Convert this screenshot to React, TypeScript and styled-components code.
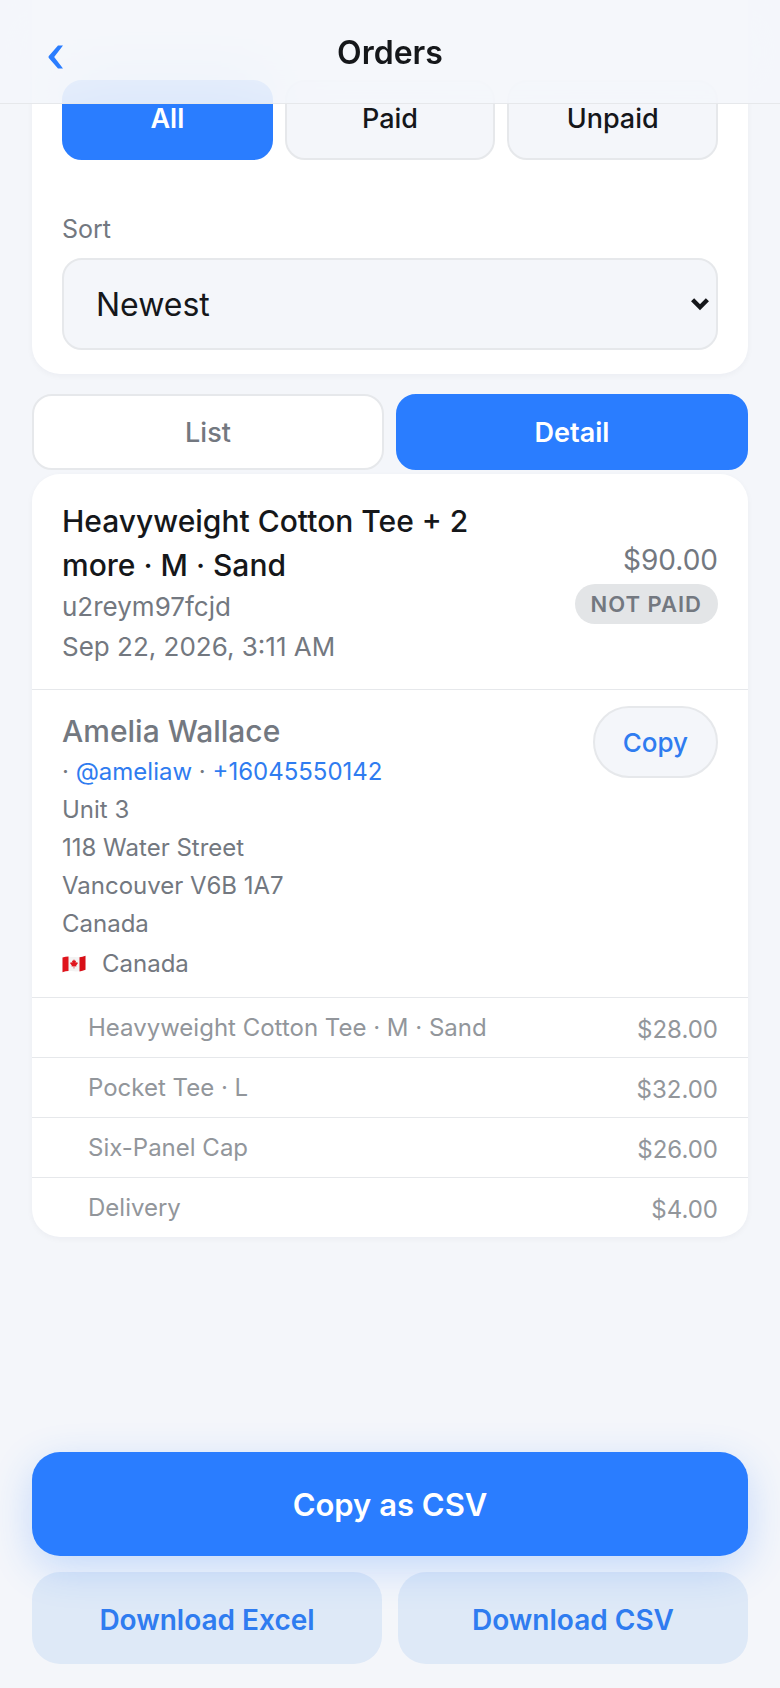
import React, { useState } from 'react';
import styled, { createGlobalStyle, css } from 'styled-components';

const color = {
  page: '#f4f6fa',
  card: '#ffffff',
  ink: '#15171a',
  muted: '#737880',
  faint: '#92969b',
  line: '#e6e8eb',
  blue: '#2a7dff',
  link: '#2f7cf0',
};

const GlobalStyle = createGlobalStyle`
  *, *::before, *::after { box-sizing: border-box; }
  body {
    margin: 0;
    background: ${color.page};
    color: ${color.ink};
    font-family: Inter, 'Liberation Sans', sans-serif;
  }
  h1, h2, h3, p, ul { margin: 0; padding: 0; }
  button, select { font-family: inherit; cursor: pointer; }
  svg { display: block; }
`;

const Page = styled.div`
  display: flex;
  flex-direction: column;
  min-height: 100vh;
`;

const Header = styled.header`
  position: fixed;
  inset: 0 0 auto 0;
  z-index: 10;
  display: grid;
  grid-template-columns: 72px 1fr 72px;
  align-items: center;
  height: 104px;
  padding: 3px 16px 0;
  border-bottom: 1px solid ${color.line};

  &::before,
  &::after {
    content: '';
    position: absolute;
    inset: 0;
    z-index: -1;
  }
  &::before {
    backdrop-filter: blur(32px);
    opacity: 0.6;
  }
  &::after {
    background: rgba(244, 246, 250, 0.88);
  }
`;

const BackButton = styled.button`
  display: grid;
  place-items: center;
  width: 80px;
  height: 80px;
  padding: 8px 0 0;
  border: 0;
  background: none;
  color: ${color.blue};
`;

const Title = styled.h1`
  font-size: 32px;
  line-height: 40px;
  font-weight: 600;
  text-align: center;
`;

const Main = styled.main`
  padding: 0 32px;
`;

const cardSurface = css`
  background: ${color.card};
  box-shadow: 0 2px 6px rgba(20, 30, 50, 0.04);
`;

const FilterCard = styled.section`
  ${cardSurface}
  padding: 80px 30px 24px;
  border-radius: 0 0 28px 28px;
`;

const StatusGroup = styled.div`
  display: grid;
  grid-template-columns: repeat(3, 1fr);
  gap: 12px;
`;

const Choice = styled.button<{ $active: boolean; $tone: 'soft' | 'plain' }>`
  height: ${(p) => (p.$tone === 'soft' ? 80 : 76)}px;
  padding: 0 0 ${(p) => (p.$tone === 'soft' ? 4 : 0)}px;
  border: 2px solid ${(p) => (p.$active ? color.blue : color.line)};
  border-radius: 20px;
  background: ${(p) =>
    p.$active ? color.blue : p.$tone === 'soft' ? color.page : color.card};
  color: ${(p) =>
    p.$active ? '#ffffff' : p.$tone === 'soft' ? color.ink : color.muted};
  font-size: 27px;
  font-weight: ${(p) => (p.$active ? 600 : 500)};
`;

const SortLabel = styled.label`
  display: block;
  margin: 52px 0 12px;
  color: ${color.muted};
  font-size: 25px;
  line-height: 34px;
`;

const SelectBox = styled.div`
  display: grid;
  align-items: center;

  & > * {
    grid-area: 1 / 1;
  }
  & > svg {
    justify-self: end;
    margin-right: 8px;
    pointer-events: none;
  }
`;

const Select = styled.select`
  appearance: none;
  width: 100%;
  height: 92px;
  padding: 0 48px 0 32px;
  border: 2px solid ${color.line};
  border-radius: 20px;
  background: ${color.page};
  color: ${color.ink};
  font-size: 32px;
`;

const ViewGroup = styled.div`
  display: grid;
  grid-template-columns: repeat(2, 1fr);
  gap: 12px;
  margin: 20px 0 4px;
`;

const OrderCard = styled.article`
  ${cardSurface}
  border-radius: 28px;
  overflow: hidden;
`;

const OrderHead = styled.div`
  display: flex;
  align-items: center;
  justify-content: space-between;
  gap: 40px;
  padding: 25px 30px 22px;
  border-bottom: 1px solid ${color.line};
`;

const OrderTitle = styled.h2`
  font-size: 30px;
  line-height: 44px;
  font-weight: 500;
`;

const Meta = styled.p`
  color: ${color.muted};
  font-size: 26px;
  line-height: 40px;
`;

const Total = styled.div`
  display: flex;
  flex: none;
  flex-direction: column;
  align-items: flex-end;
  gap: 6px;
  color: ${color.muted};
`;

const Amount = styled.span`
  font-size: 28px;
  line-height: 36px;
`;

const Badge = styled.span`
  padding: 0 16px;
  border-radius: 20px;
  background: #e3e5e7;
  font-size: 22px;
  line-height: 40px;
  font-weight: 600;
  letter-spacing: 1px;
`;

const Customer = styled.div`
  display: flex;
  align-items: flex-start;
  justify-content: space-between;
  padding: 16px 30px 12px;
  color: ${color.muted};
`;

const CustomerName = styled.h3`
  padding-top: 3px;
  font-size: 30px;
  line-height: 44px;
  font-weight: 500;
`;

const AddressLine = styled.p`
  font-size: 24px;
  line-height: 38px;
`;

const Country = styled.p`
  display: flex;
  align-items: center;
  gap: 16px;
  font-size: 24px;
  line-height: 42px;
`;

const ContactLink = styled.a`
  color: ${color.link};
  text-decoration: none;
`;

const CopyButton = styled.button`
  height: 72px;
  padding: 0 28px;
  border: 2px solid ${color.line};
  border-radius: 36px;
  background: ${color.page};
  color: ${color.link};
  font-size: 26px;
  font-weight: 500;
`;

const Items = styled.ul`
  list-style: none;
`;

const Item = styled.li`
  display: flex;
  align-items: flex-end;
  justify-content: space-between;
  padding: 13px 30px 12px 56px;
  border-top: 1px solid ${color.line};
  color: ${color.faint};
  font-size: 24px;
`;

const ItemName = styled.span`
  line-height: 34px;
`;

const ItemPrice = styled.span`
  line-height: 30px;
`;

const Footer = styled.footer`
  position: sticky;
  bottom: 0;
  display: grid;
  grid-template-columns: repeat(2, 1fr);
  gap: 16px;
  margin-top: auto;
  padding: 0 32px 24px;
`;

const PrimaryButton = styled.button`
  grid-column: 1 / -1;
  height: 104px;
  border: 0;
  border-radius: 28px;
  background: ${color.blue};
  box-shadow: 0 12px 40px rgba(42, 125, 255, 0.24);
  color: #ffffff;
  font-size: 31px;
  font-weight: 600;
`;

const SecondaryButton = styled.button`
  height: 92px;
  padding: 3px 0 0;
  border: 0;
  border-radius: 28px;
  background: rgba(42, 132, 232, 0.11);
  color: ${color.link};
  font-size: 28px;
  font-weight: 600;
`;

const BackIcon = () => (
  <svg width="16" height="24" viewBox="0 0 16 24" aria-hidden="true">
    <path d="M10 0.5H15L6.2 12L15 23.5H10L0.6 12.8V11.2Z" fill="currentColor" />
  </svg>
);

const ChevronIcon = () => (
  <svg width="20" height="14" viewBox="0 0 20 14" aria-hidden="true">
    <path d="M2.6 2.8L10 10.2L17.4 2.8" fill="none" stroke={color.ink} strokeWidth="4.4" />
  </svg>
);

const CanadaFlag = () => (
  <svg width="24" height="18" viewBox="0 0 24 18" aria-hidden="true">
    <g transform="translate(0.5 0)">
      <path d="M0 2.6C4 1 7.500 1.800 11.500 2.100C15 2.400 19 2.200 23 0.800V14.800C19 16.400 15 16.600 11.500 16.200C7.500 15.800 4 15.600 0 17.200Z" fill="#f3f3f3" />
      <path d="M0 2.600C2 1.800 4 1.600 6 1.600V16C4 16 2 16.400 0 17.200Z" fill="#e0141c" />
      <path d="M17 2.200C19 2 21 1.500 23 0.800V14.800C21 15.600 19 16.200 17 16.400Z" fill="#d80f17" />
      <path d="M11.500 4.200L12.500 6L13.500 5.500L13.200 8L14.500 6.900L15.400 8.200L13.700 10.600L13.900 11.400L11.800 11.200V13.400H11.200V11.200L9.100 11.400L9.300 10.600L7.600 8.200L8.500 6.900L9.800 8L9.500 5.500L10.500 6Z" fill="#e0141c" />
    </g>
  </svg>
);

const statuses = ['All', 'Paid', 'Unpaid'];
const views = ['List', 'Detail'];
const address = ['Unit 3', '118 Water Street', 'Vancouver V6B 1A7', 'Canada'];
const items = [
  { name: 'Heavyweight Cotton Tee · M · Sand', price: '$28.00' },
  { name: 'Pocket Tee · L', price: '$32.00' },
  { name: 'Six-Panel Cap', price: '$26.00' },
  { name: 'Delivery', price: '$4.00' },
];

export default function App() {
  const [status, setStatus] = useState('All');
  const [view, setView] = useState('Detail');

  return (
    <Page>
      <GlobalStyle />
      <Header>
        <BackButton type="button" aria-label="Back">
          <BackIcon />
        </BackButton>
        <Title>Orders</Title>
      </Header>

      <Main>
        <FilterCard>
          <StatusGroup role="group" aria-label="Payment status">
            {statuses.map((s) => (
              <Choice
                key={s}
                type="button"
                $tone="soft"
                $active={s === status}
                aria-pressed={s === status}
                onClick={() => setStatus(s)}
              >
                {s}
              </Choice>
            ))}
          </StatusGroup>
          <SortLabel htmlFor="sort">Sort</SortLabel>
          <SelectBox>
            <Select id="sort" defaultValue="newest">
              <option value="newest">Newest</option>
              <option value="oldest">Oldest</option>
            </Select>
            <ChevronIcon />
          </SelectBox>
        </FilterCard>

        <ViewGroup role="group" aria-label="View">
          {views.map((v) => (
            <Choice
              key={v}
              type="button"
              $tone="plain"
              $active={v === view}
              aria-pressed={v === view}
              onClick={() => setView(v)}
            >
              {v}
            </Choice>
          ))}
        </ViewGroup>

        <OrderCard>
          <OrderHead>
            <div>
              <OrderTitle>Heavyweight Cotton Tee + 2 more · M · Sand</OrderTitle>
              <Meta>u2reym97fcjd</Meta>
              <Meta>Sep 22, 2026, 3:11 AM</Meta>
            </div>
            <Total>
              <Amount>$90.00</Amount>
              <Badge>NOT PAID</Badge>
            </Total>
          </OrderHead>

          <Customer>
            <div>
              <CustomerName>Amelia Wallace</CustomerName>
              <AddressLine>
                · <ContactLink href="#ameliaw">@ameliaw</ContactLink> ·{' '}
                <ContactLink href="tel:+16045550142">+16045550142</ContactLink>
              </AddressLine>
              {address.map((line) => (
                <AddressLine key={line}>{line}</AddressLine>
              ))}
              <Country>
                <CanadaFlag />
                Canada
              </Country>
            </div>
            <CopyButton type="button">Copy</CopyButton>
          </Customer>

          <Items>
            {items.map((item) => (
              <Item key={item.name}>
                <ItemName>{item.name}</ItemName>
                <ItemPrice>{item.price}</ItemPrice>
              </Item>
            ))}
          </Items>
        </OrderCard>
      </Main>

      <Footer>
        <PrimaryButton type="button">Copy as CSV</PrimaryButton>
        <SecondaryButton type="button">Download Excel</SecondaryButton>
        <SecondaryButton type="button">Download CSV</SecondaryButton>
      </Footer>
    </Page>
  );
}
